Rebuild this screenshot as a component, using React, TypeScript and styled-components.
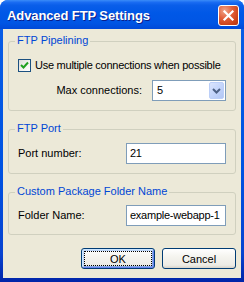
import React from "react";
import styled, { createGlobalStyle } from "styled-components";

const Global = createGlobalStyle`
  html, body { margin: 0; padding: 0; background: #ffffff; }
  body { font-family: "Liberation Sans", Arial, sans-serif; font-size: 11px; color: #000; }
`;

const Window = styled.div`
  width: 244px;
  height: 282px;
  box-sizing: border-box;
  display: flex;
  flex-direction: column;
  border-radius: 8px 8px 0 0;
  background: linear-gradient(to bottom, #0a5fe6 0%, #0053e2 60%, #0843d0 90%, #0024a8 100%);
  overflow: hidden;
`;

const TitleBar = styled.div`
  height: 29px;
  flex: none;
  display: flex;
  align-items: center;
  justify-content: space-between;
  padding: 0 5px 0 7px;
  box-sizing: border-box;
  background: linear-gradient(
    to bottom,
    #3b8cf8 0%,
    #1a6cf2 8%,
    #0a5ee9 18%,
    #0058e7 45%,
    #0055e4 80%,
    #0049d8 100%
  );
`;

const Title = styled.span`
  font-family: "Liberation Sans", Arial, sans-serif;
  font-weight: bold;
  font-size: 13px;
  color: #ffffff;
  text-shadow: 1px 1px 0 #0a1e8c;
  padding-top: 1px;
  letter-spacing: -0.1px;
`;

const CloseButton = styled.div`
  width: 21px;
  height: 21px;
  box-sizing: border-box;
  border: 1px solid #ffffff;
  border-radius: 3px;
  background: radial-gradient(circle at 30% 25%, #f0a58a 0%, #e2603b 40%, #cc4218 75%, #b53510 100%);
  display: flex;
  align-items: center;
  justify-content: center;
  margin-top: 1px;
`;

const Client = styled.div`
  flex: 1;
  margin: 0 3px 4px 3px;
  background: #ece9d8;
  display: flex;
  flex-direction: column;
  padding: 12px 5px 0 5px;
  gap: 18px;
`;

const Group = styled.div<{ $h: number; $pt: number }>`
  position: relative;
  height: ${(p) => p.$h}px;
  flex: none;
  box-sizing: border-box;
  border: 1px solid #d0d0bf;
  border-radius: 3px;
  padding: ${(p) => p.$pt}px 9px 0 9px;
  display: flex;
  flex-direction: column;
`;

const Legend = styled.span`
  position: absolute;
  top: -8px;
  left: 6px;
  padding: 0 2px;
  line-height: 13px;
  background: #ece9d8;
  color: #0046d5;
  white-space: nowrap;
`;

const CheckRow = styled.label`
  display: flex;
  align-items: center;
  gap: 4px;
  height: 13px;
  line-height: 13px;
  white-space: nowrap;
  letter-spacing: -0.25px;
`;

const CheckBox = styled.span`
  width: 13px;
  height: 13px;
  flex: none;
  box-sizing: border-box;
  border: 1px solid #1c5180;
  background: linear-gradient(135deg, #dcdcd7 0%, #f4f4f1 60%, #ffffff 100%);
  display: flex;
  align-items: center;
  justify-content: center;
`;

const FieldRow = styled.div<{ $end?: boolean; $mt?: number }>`
  display: flex;
  align-items: center;
  justify-content: ${(p) => (p.$end ? "flex-end" : "space-between")};
  gap: 10px;
  margin-top: ${(p) => p.$mt ?? 0}px;
  line-height: 13px;
  white-space: nowrap;
`;

const Select = styled.div`
  width: 74px;
  height: 21px;
  flex: none;
  box-sizing: border-box;
  border: 1px solid #7f9db9;
  background: #ffffff;
  display: flex;
  align-items: center;
  justify-content: space-between;
  padding: 0 1px 0 4px;
`;

const SelectArrow = styled.span`
  width: 15px;
  height: 17px;
  box-sizing: border-box;
  border: 1px solid #bccff8;
  border-radius: 2px;
  background: linear-gradient(135deg, #dbe5fd 0%, #c4d5fb 50%, #b2c7f5 100%);
  display: flex;
  align-items: center;
  justify-content: center;
`;

const TextInput = styled.div`
  width: 100px;
  height: 21px;
  flex: none;
  box-sizing: border-box;
  border: 1px solid #7f9db9;
  background: #ffffff;
  display: flex;
  align-items: center;
  padding-left: 3px;
  white-space: nowrap;
  overflow: hidden;
  letter-spacing: -0.25px;
`;

const ButtonRow = styled.div`
  display: flex;
  justify-content: flex-end;
  gap: 7px;
  margin-top: -5px;
`;

const Button = styled.div<{ $focused?: boolean }>`
  position: relative;
  width: 74px;
  height: 21px;
  box-sizing: border-box;
  border: 1px solid #003c74;
  border-radius: 3px;
  background: linear-gradient(to bottom, #ffffff 0%, #f5f4ef 40%, #ecebe5 85%, #d8d3c8 100%);
  display: flex;
  align-items: center;
  justify-content: center;
  box-shadow: ${(p) =>
    p.$focused
      ? "inset 1px 1px 0 #cee7ff, inset -1px -1px 0 #6982ee, inset 2px 2px 0 #bcd4f6, inset -2px -2px 0 #89ade4"
      : "none"};
  &::after {
    content: "";
    display: ${(p) => (p.$focused ? "block" : "none")};
    position: absolute;
    inset: 2px;
    border: 1px dotted #000000;
  }
`;

export default function App() {
  return (
    <>
      <Global />
      <Window>
        <TitleBar>
          <Title>Advanced FTP Settings</Title>
          <CloseButton>
            <svg width="13" height="13" viewBox="0 0 13 13">
              <path d="M2.5 2.5 L10.5 10.5 M10.5 2.5 L2.5 10.5" stroke="#ffffff" strokeWidth="2.2" strokeLinecap="square" />
            </svg>
          </CloseButton>
        </TitleBar>
        <Client>
          <Group $h={70} $pt={17}>
            <Legend>FTP Pipelining</Legend>
            <CheckRow>
              <CheckBox>
                <svg width="9" height="9" viewBox="0 0 9 9">
                  <path d="M1 4 L3.5 6.5 L8 1.5" fill="none" stroke="#21a121" strokeWidth="2" />
                </svg>
              </CheckBox>
              Use multiple connections when possible
            </CheckRow>
            <FieldRow $end $mt={8}>
              <span>Max connections:</span>
              <Select>
                <span>5</span>
                <SelectArrow>
                  <svg width="9" height="6" viewBox="0 0 9 6">
                    <path d="M1 1 L4.5 4.5 L8 1" fill="none" stroke="#4d6185" strokeWidth="2" />
                  </svg>
                </SelectArrow>
              </Select>
            </FieldRow>
          </Group>
          <Group $h={45} $pt={13}>
            <Legend>FTP Port</Legend>
            <FieldRow>
              <span>Port number:</span>
              <TextInput>21</TextInput>
            </FieldRow>
          </Group>
          <Group $h={43} $pt={12}>
            <Legend>Custom Package Folder Name</Legend>
            <FieldRow>
              <span>Folder Name:</span>
              <TextInput>example-webapp-1</TextInput>
            </FieldRow>
          </Group>
          <ButtonRow>
            <Button $focused>OK</Button>
            <Button>Cancel</Button>
          </ButtonRow>
        </Client>
      </Window>
    </>
  );
}
